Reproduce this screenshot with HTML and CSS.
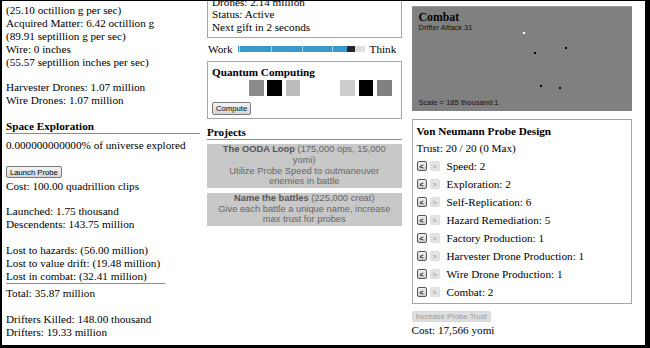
FILE: index.html
```html
<!DOCTYPE html>
<html>
<head>
<meta charset="utf-8">
<link rel="stylesheet" href="styles.css">
</head>
<body>
<div class="frame">
  <div class="col col-left">
    <div class="line clipped">Available Matter: 6.53 octillion g</div>
    <div class="line">(25.10 octillion g per sec)</div>
    <div class="line">Acquired Matter: 6.42 octillion g</div>
    <div class="line">(89.91 septillion g per sec)</div>
    <div class="line">Wire: 0 inches</div>
    <div class="line">(55.57 septillion inches per sec)</div>
    <div class="blank"></div>
    <div class="line">Harvester Drones: 1.07 million</div>
    <div class="line">Wire Drones: 1.07 million</div>
    <div class="blank"></div>
    <div class="heading">Space Exploration</div>
    <div class="line explored">0.000000000000% of universe explored</div>
    <div class="blank"></div>
    <div class="btn-line"><button class="btn">Launch Probe</button></div>
    <div class="line">Cost: 100.00 quadrillion clips</div>
    <div class="blank"></div>
    <div class="line">Launched: 1.75 thousand</div>
    <div class="line">Descendents: 143.75 million</div>
    <div class="blank"></div>
    <div class="line">Lost to hazards: (56.00 million)</div>
    <div class="line">Lost to value drift: (19.48 million)</div>
    <div class="line losses-last">Lost in combat: (32.41 million)</div>
    <div class="line total">Total: 35.87 million</div>
    <div class="blank"></div>
    <div class="line">Drifters Killed: 148.00 thousand</div>
    <div class="line">Drifters: 19.33 million</div>
  </div>

  <div class="col col-center">
    <div class="box swarm">
      <div class="line">Drones: 2.14 million</div>
      <div class="line">Status: Active</div>
      <div class="line">Next gift in 2 seconds</div>
    </div>
    <div class="slider-row">
      <span>Work</span>
      <div class="track">
        <span class="tick" style="left:1px"></span>
        <span class="tick" style="left:33px"></span>
        <span class="tick" style="left:64px"></span>
        <span class="tick" style="left:94px"></span>
        <span class="tick" style="left:124px"></span>
      </div>
      <span>Think</span>
    </div>
    <div class="box quantum">
      <div class="heading-plain">Quantum Computing</div>
      <div class="chips">
        <span class="chip" style="background:#8a8a8a"></span>
        <span class="chip" style="background:#000"></span>
        <span class="chip" style="background:#bcbcbc"></span>
        <span class="chip chip-off"></span>
        <span class="chip chip-off"></span>
        <span class="chip" style="background:#cdcdcd"></span>
        <span class="chip" style="background:#000"></span>
        <span class="chip" style="background:#808080"></span>
      </div>
      <button class="btn compute">Compute</button>
    </div>
    <div class="heading projects-h">Projects</div>
    <div class="project"><b>The OODA Loop</b> (175,000 ops, 15,000<br>yomi)<br>Utilize Probe Speed to outmaneuver<br>enemies in battle</div>
    <div class="project"><b>Name the battles</b> (225,000 creat)<br>Give each battle a unique name, increase<br>max trust for probes</div>
  </div>

  <div class="col col-right">
    <div class="combat">
      <div class="combat-title">Combat</div>
      <div class="canvas-text">Drifter Attack 31</div>
      <span class="dot white" style="left:111px;top:25px"></span>
      <span class="dot" style="left:122px;top:45px"></span>
      <span class="dot" style="left:153px;top:40px"></span>
      <span class="dot" style="left:128px;top:78px"></span>
      <span class="dot" style="left:147px;top:80px"></span>
      <div class="canvas-text scale">Scale = 185 thousand:1</div>
    </div>
    <div class="box probe">
      <div class="heading-plain">Von Neumann Probe Design</div>
      <div class="prow">Trust: 20 / 20 (0 Max)</div>
      <div class="prow"><button class="mini">&lt;</button><button class="mini off">&gt;</button><span>Speed: 2</span></div>
      <div class="prow"><button class="mini">&lt;</button><button class="mini off">&gt;</button><span>Exploration: 2</span></div>
      <div class="prow"><button class="mini">&lt;</button><button class="mini off">&gt;</button><span>Self-Replication: 6</span></div>
      <div class="prow"><button class="mini">&lt;</button><button class="mini off">&gt;</button><span>Hazard Remediation: 5</span></div>
      <div class="prow"><button class="mini">&lt;</button><button class="mini off">&gt;</button><span>Factory Production: 1</span></div>
      <div class="prow"><button class="mini">&lt;</button><button class="mini off">&gt;</button><span>Harvester Drone Production: 1</span></div>
      <div class="prow"><button class="mini">&lt;</button><button class="mini off">&gt;</button><span>Wire Drone Production: 1</span></div>
      <div class="prow"><button class="mini">&lt;</button><button class="mini off">&gt;</button><span>Combat: 2</span></div>
    </div>
    <button class="btn disabled trust-btn">Increase Probe Trust</button>
    <div class="line cost">Cost: 17,566 yomi</div>
  </div>
</div>
</body>
</html>
```

FILE: styles.css
```css
html, body {
  margin: 0;
  padding: 0;
  background: #fff;
}
body {
  font-family: "Liberation Serif", "Times New Roman", serif;
  font-size: 11.2px;
  line-height: 12.9px;
  color: #000;
}
.frame {
  width: 650px;
  height: 348px;
  box-sizing: border-box;
  border-style: solid;
  border-color: #000;
  border-width: 1px 5px 3px 2px;
  overflow: hidden;
  display: flex;
  align-items: flex-start;
  background: #fff;
}
.col {
  flex: none;
  display: flex;
  flex-direction: column;
  align-items: flex-start;
}
.line {
  height: 12.9px;
  white-space: nowrap;
}
.line.clipped {
  line-height: 7px;
}
.blank {
  height: 12.9px;
}
.col-left {
  width: 194px;
  margin-left: 4px;
  margin-top: -9.9px;
  align-items: stretch;
}
.heading {
  font-weight: bold;
  height: 12.9px;
  border-bottom: 1px solid #8c8c8c;
  padding-bottom: 0;
}
.explored {
  margin-top: 4.8px;
}
.btn-line {
  height: 15.1px;
  display: flex;
  align-items: center;
}
.btn {
  font-family: "Liberation Sans", Arial, sans-serif;
  font-size: 7.7px;
  line-height: 9px;
  height: 12px;
  padding: 0 3px;
  border: 1px solid #7a7a7a;
  border-radius: 2px;
  background: linear-gradient(#f4f4f4, #d6d6d6);
  color: #000;
  box-sizing: border-box;
  white-space: nowrap;
}
.losses-last {
  width: 159px;
  border-bottom: 1px solid #8c8c8c;
}
.total {
  margin-top: 3.5px;
}

.col-center {
  width: 194.5px;
  margin-left: 7px;
  margin-top: -9.5px;
  align-items: stretch;
}
.box {
  border: 1px solid #a6a6a6;
}
.swarm {
  padding: 3px 4px 3.3px;
}
.slider-row {
  display: flex;
  align-items: center;
  height: 13px;
  margin: 4.5px 0 5px 1px;
  gap: 5px;
}
.track {
  position: relative;
  width: 127px;
  height: 6px;
  background: linear-gradient(to right, #3a98cd 0, #3a98cd 109px, #262626 109px, #262626 117px, #dcdcdc 117px);
}
.tick {
  position: absolute;
  top: 0;
  width: 1px;
  height: 6px;
  background: rgba(255, 255, 255, 0.55);
}
.quantum {
  display: flex;
  flex-direction: column;
  padding: 4.5px 4px 2.5px;
}
.heading-plain {
  font-weight: bold;
  height: 12.9px;
}
.chips {
  display: flex;
  gap: 3.7px;
  margin: 1px 0 0 37px;
  height: 16px;
}
.chip {
  width: 14.6px;
  height: 16px;
}
.chip-off {
  visibility: hidden;
}
.compute {
  margin-top: 6px;
  width: 39px;
  height: 13px;
  align-self: flex-start;
}
.projects-h {
  margin-top: 7.5px;
  margin-bottom: 3.5px;
}
.project {
  background: #c8c8c8;
  color: #666;
  font-family: "Liberation Sans", Arial, sans-serif;
  font-size: 9.33px;
  line-height: 10.7px;
  text-align: center;
  padding: 0.5px 4px;
  white-space: nowrap;
  margin-bottom: 5px;
}
.project b {
  color: #555;
}

.col-right {
  width: 220px;
  margin-left: 10px;
  margin-top: 5px;
  align-items: stretch;
}
.combat {
  position: relative;
  height: 105px;
  box-sizing: border-box;
  background: #808080;
  border-top: 1px solid #9a9a9a;
  padding: 3.5px 7px 0;
}
.combat-title {
  font-weight: bold;
  font-size: 11.8px;
  line-height: 13px;
}
.canvas-text {
  font-family: "Liberation Sans", Arial, sans-serif;
  font-size: 7.6px;
  line-height: 8px;
  color: #111;
}
.canvas-text.scale {
  position: absolute;
  left: 7px;
  bottom: 4px;
}
.dot {
  position: absolute;
  width: 2px;
  height: 2px;
  background: #000;
}
.dot.white {
  background: #fff;
}
.probe {
  margin-top: 8px;
  padding: 4.5px 4px 1.5px;
}
.prow {
  height: 18px;
  display: flex;
  align-items: center;
  white-space: nowrap;
}
.heading-plain + .prow {
  margin-top: 2px;
}
.mini {
  width: 10px;
  height: 10px;
  padding: 0;
  margin: 0 3px 0 0;
  box-sizing: border-box;
  border: 1px solid #555;
  border-radius: 2px;
  background: linear-gradient(#f0f0f0, #cfcfcf);
  font-family: "Liberation Sans", Arial, sans-serif;
  font-size: 7px;
  line-height: 7px;
  font-weight: bold;
  color: #222;
}
.mini.off {
  border-color: #dcdcdc;
  background: #e4e4e4;
  color: #aaa;
  margin-right: 7px;
}
.trust-btn {
  align-self: flex-start;
  margin-top: 7px;
  width: 79px;
  height: 11px;
  line-height: 9px;
  border: 1px solid #d8d8d8;
  background: #dedede;
  color: #9a9a9a;
}
.cost {
  margin-top: 2px;
}
```
